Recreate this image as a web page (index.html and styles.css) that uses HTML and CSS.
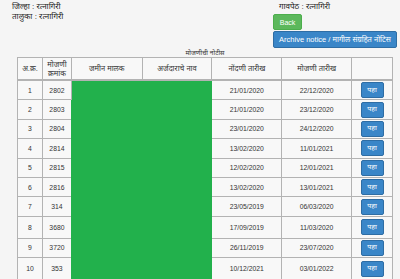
FILE: index.html
```html
<!DOCTYPE html>
<html lang="mr">
<head>
<meta charset="utf-8">
<title>मोजणीची नोटीस</title>
<link rel="stylesheet" href="styles.css">
</head>
<body>
<div class="page">
  <header class="top">
    <div class="loc-left">
      <div class="loc-line">जिल्हा : रत्नागिरी</div>
      <div class="loc-line">तालुका : रत्नागिरी</div>
    </div>
    <div class="loc-right">
      <div class="loc-line village">गावपेठ : रत्नागिरी</div>
      <button class="btn btn-green">Back</button>
      <button class="btn btn-blue btn-archive">Archive notice / मागील संग्रहित नोटिस</button>
    </div>
  </header>
  <table class="notices">
    <caption>मोजणीची नोटीस</caption>
    <thead>
      <tr>
        <th class="c-no">अ.क्र.</th>
        <th class="c-mno">मोजणी क्रमांक</th>
        <th class="c-owner">जमीन मालक</th>
        <th class="c-appl">अर्जदाराचे नाव</th>
        <th class="c-date">नोंदणी तारीख</th>
        <th class="c-date">मोजणी तारीख</th>
        <th class="c-act"></th>
      </tr>
    </thead>
    <tbody>
      <tr><td>1</td><td>2802</td><td class="masked" rowspan="10" colspan="2"></td><td>21/01/2020</td><td>22/12/2020</td><td><button class="btn btn-blue btn-view">पहा</button></td></tr>
      <tr><td>2</td><td>2803</td><td>21/01/2020</td><td>23/12/2020</td><td><button class="btn btn-blue btn-view">पहा</button></td></tr>
      <tr><td>3</td><td>2804</td><td>23/01/2020</td><td>24/12/2020</td><td><button class="btn btn-blue btn-view">पहा</button></td></tr>
      <tr><td>4</td><td>2814</td><td>13/02/2020</td><td>11/01/2021</td><td><button class="btn btn-blue btn-view">पहा</button></td></tr>
      <tr><td>5</td><td>2815</td><td>12/02/2020</td><td>12/01/2021</td><td><button class="btn btn-blue btn-view">पहा</button></td></tr>
      <tr><td>6</td><td>2816</td><td>13/02/2020</td><td>13/01/2021</td><td><button class="btn btn-blue btn-view">पहा</button></td></tr>
      <tr><td>7</td><td>314</td><td>23/05/2019</td><td>06/03/2020</td><td><button class="btn btn-blue btn-view">पहा</button></td></tr>
      <tr class="tall"><td>8</td><td>3680</td><td>17/09/2019</td><td>11/03/2020</td><td><button class="btn btn-blue btn-view">पहा</button></td></tr>
      <tr><td>9</td><td>3720</td><td>26/11/2019</td><td>23/07/2020</td><td><button class="btn btn-blue btn-view">पहा</button></td></tr>
      <tr class="tall"><td>10</td><td>353</td><td>10/12/2021</td><td>03/01/2022</td><td><button class="btn btn-blue btn-view">पहा</button></td></tr>
    </tbody>
  </table>
</div>
</body>
</html>
```
FILE: styles.css
```css
html, body {
  margin: 0;
  padding: 0;
}
body {
  background: #f5f5f5;
  color: #333;
  font-family: "Liberation Sans", "Noto Sans Devanagari", "Lohit Devanagari", "Noto Sans", sans-serif;
  font-size: 7px;
}
.page {
  padding: 2px 3px 0 12px;
}
.top {
  display: flex;
  justify-content: space-between;
}
.loc-left {
  display: flex;
  flex-direction: column;
}
.loc-line {
  font-size: 8px;
  line-height: 10px;
  color: #222;
}
.loc-right {
  display: flex;
  flex-direction: column;
  align-items: flex-start;
  width: 124px;
}
.village {
  margin-left: 6px;
  margin-bottom: 2px;
}
.btn {
  border: 1px solid transparent;
  border-radius: 2px;
  color: #fff;
  font-family: inherit;
  font-size: 7px;
  padding: 0;
  margin: 0;
  cursor: pointer;
}
.btn-green {
  background: #5cb85c;
  border-color: #4cae4c;
  width: 29px;
  height: 16px;
  margin-bottom: 1px;
}
.btn-blue {
  background: #3a86c8;
  border-color: #2e6da4;
}
.btn-archive {
  width: 124px;
  height: 17px;
  font-size: 7.5px;
}
.notices {
  border-collapse: collapse;
  width: 376px;
  margin-left: 5px;
  background: #f8f8f8;
}
.notices caption {
  font-size: 6.5px;
  line-height: 8px;
  color: #333;
  padding: 1px 0 0;
  height: 8px;
}
.notices th,
.notices td {
  border: 1px solid #b3b3b3;
  text-align: center;
  vertical-align: middle;
  padding: 0;
}
.notices th {
  font-weight: normal;
  font-size: 7.5px;
  line-height: 9px;
  height: 21px;
  border-bottom-width: 2px;
}
.notices td {
  height: 18.4px;
  font-size: 6.8px;
}
.notices tr.tall td {
  height: 21px;
}
.c-no { width: 24px; }
.c-mno { width: 28px; }
.c-owner { width: 70px; }
.c-appl { width: 69px; }
.c-date { width: 69px; }
.c-act { width: 40px; }
.notices td.masked {
  background: #22b14c;
  border-color: #22b14c;
}
.btn-view {
  width: 23px;
  height: 16px;
  font-size: 7px;
}
```
